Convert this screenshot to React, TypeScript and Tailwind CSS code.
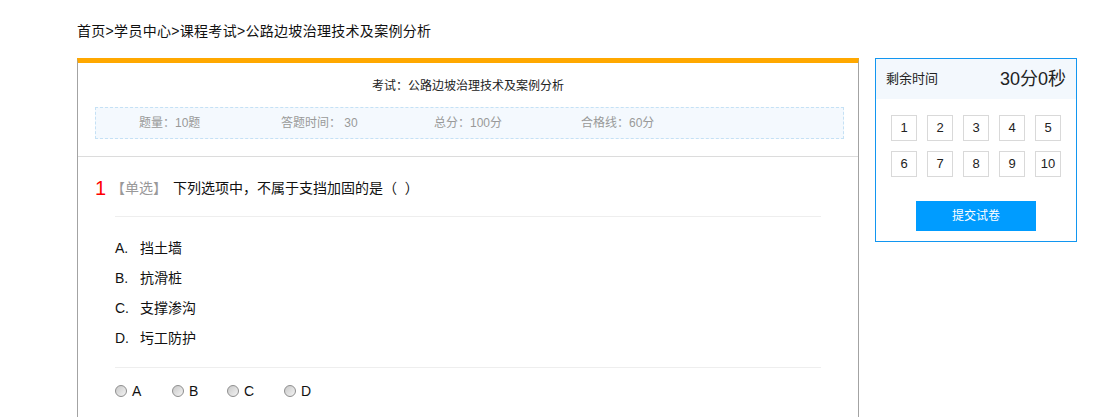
const nums = [1, 2, 3, 4, 5, 6, 7, 8, 9, 10];

const options = [
  { key: 'A.', text: '挡土墙' },
  { key: 'B.', text: '抗滑桩' },
  { key: 'C.', text: '支撑渗沟' },
  { key: 'D.', text: '圬工防护' },
];

const radios = [
  { key: 'A', w: 'w-[57px]' },
  { key: 'B', w: 'w-[55px]' },
  { key: 'C', w: 'w-[57px]' },
  { key: 'D', w: 'w-[40px]' },
];

function Radio() {
  return (
    <span className="inline-block w-[12px] h-[12px] rounded-full border border-[#8e8e8e] bg-gradient-to-br from-[#c9c9c9] to-[#f4f4f4]" />
  );
}

function ExamPaper() {
  return (
    <div className="w-[782px] border-x border-[#a3a3a3] border-t-[5px] border-t-[#ffa800] pb-[30px]">
      {/* cabecera */}
      <div className="border-b border-[#dcdcdc] pb-[17px]">
        <div className="pt-[13px] text-center text-[12px] leading-[20px]">考试：公路边坡治理技术及案例分析</div>
        <div className="mt-[11px] ml-[17px] mr-[14px] h-[32px] flex items-center border border-dashed border-[#c5e1f5] bg-[#f4f9fe] pl-[43px] text-[12px] text-[#999]">
          <span className="w-[142px]">题量：10题</span>
          <span className="w-[153px]">答题时间： 30</span>
          <span className="w-[147px]">总分：100分</span>
          <span>合格线：60分</span>
        </div>
      </div>

      {/* pregunta */}
      <div className="pt-[19px] pl-[17px] flex items-center">
        <span className="w-[16px] text-[20px] leading-[24px] text-[#f00]">1</span>
        <span className="text-[14px] leading-[24px] text-[#999]">【单选】</span>
        <span className="ml-[6px] text-[14px] leading-[24px] text-[#111]">下列选项中，不属于支挡加固的是（&nbsp; ）</span>
      </div>
      <div className="mx-[37px]">
        <div className="border-t border-[#eee] mt-[16px] pt-[16px] pb-[14px]">
          {options.map((o) => (
            <div key={o.key} className="flex items-center h-[30px] text-[14px] text-[#111]">
              <span className="w-[25px]">{o.key}</span>
              <span>{o.text}</span>
            </div>
          ))}
        </div>
        <div className="border-t border-[#eee] pt-[13px] flex items-center h-[20px] box-content text-[14px] text-[#111]">
          {radios.map((r) => (
            <label key={r.key} className={`${r.w} flex items-center gap-[5px]`}>
              <Radio />
              <span>{r.key}</span>
            </label>
          ))}
        </div>
      </div>
    </div>
  );
}

function SidePanel() {
  return (
    <div className="w-[202px] border border-[#1296f0]">
      <div className="h-[40px] bg-[#f3f8fd] flex items-center justify-between px-[10px]">
        <span className="text-[13px]">剩余时间</span>
        <span className="text-[18px]">30分0秒</span>
      </div>
      <div className="pt-[16px] px-[15px] grid grid-cols-5 gap-[10px]">
        {nums.map((n) => (
          <div key={n} className="w-[26px] h-[26px] border border-[#d9d9d9] flex items-center justify-center text-[13px] text-[#222]">
            {n}
          </div>
        ))}
      </div>
      <div className="mt-[24px] mb-[10px] mx-auto w-[120px] h-[30px] bg-[#009cff] text-white text-[12px] flex items-center justify-center">
        提交试卷
      </div>
    </div>
  );
}

export default function App() {
  return (
    <div className="min-h-screen bg-white font-['Liberation_Sans','Noto_Sans_CJK_SC',sans-serif] text-[#222]">
      <div className="pl-[77px] pt-[21px]">
        <div className="text-[14px] leading-[20px] tracking-[0.3px] text-[#111]">首页&gt;学员中心&gt;课程考试&gt;公路边坡治理技术及案例分析</div>
        <div className="mt-[17px] flex items-start gap-[16px]">
          <ExamPaper />
          <SidePanel />
        </div>
      </div>
    </div>
  );
}
